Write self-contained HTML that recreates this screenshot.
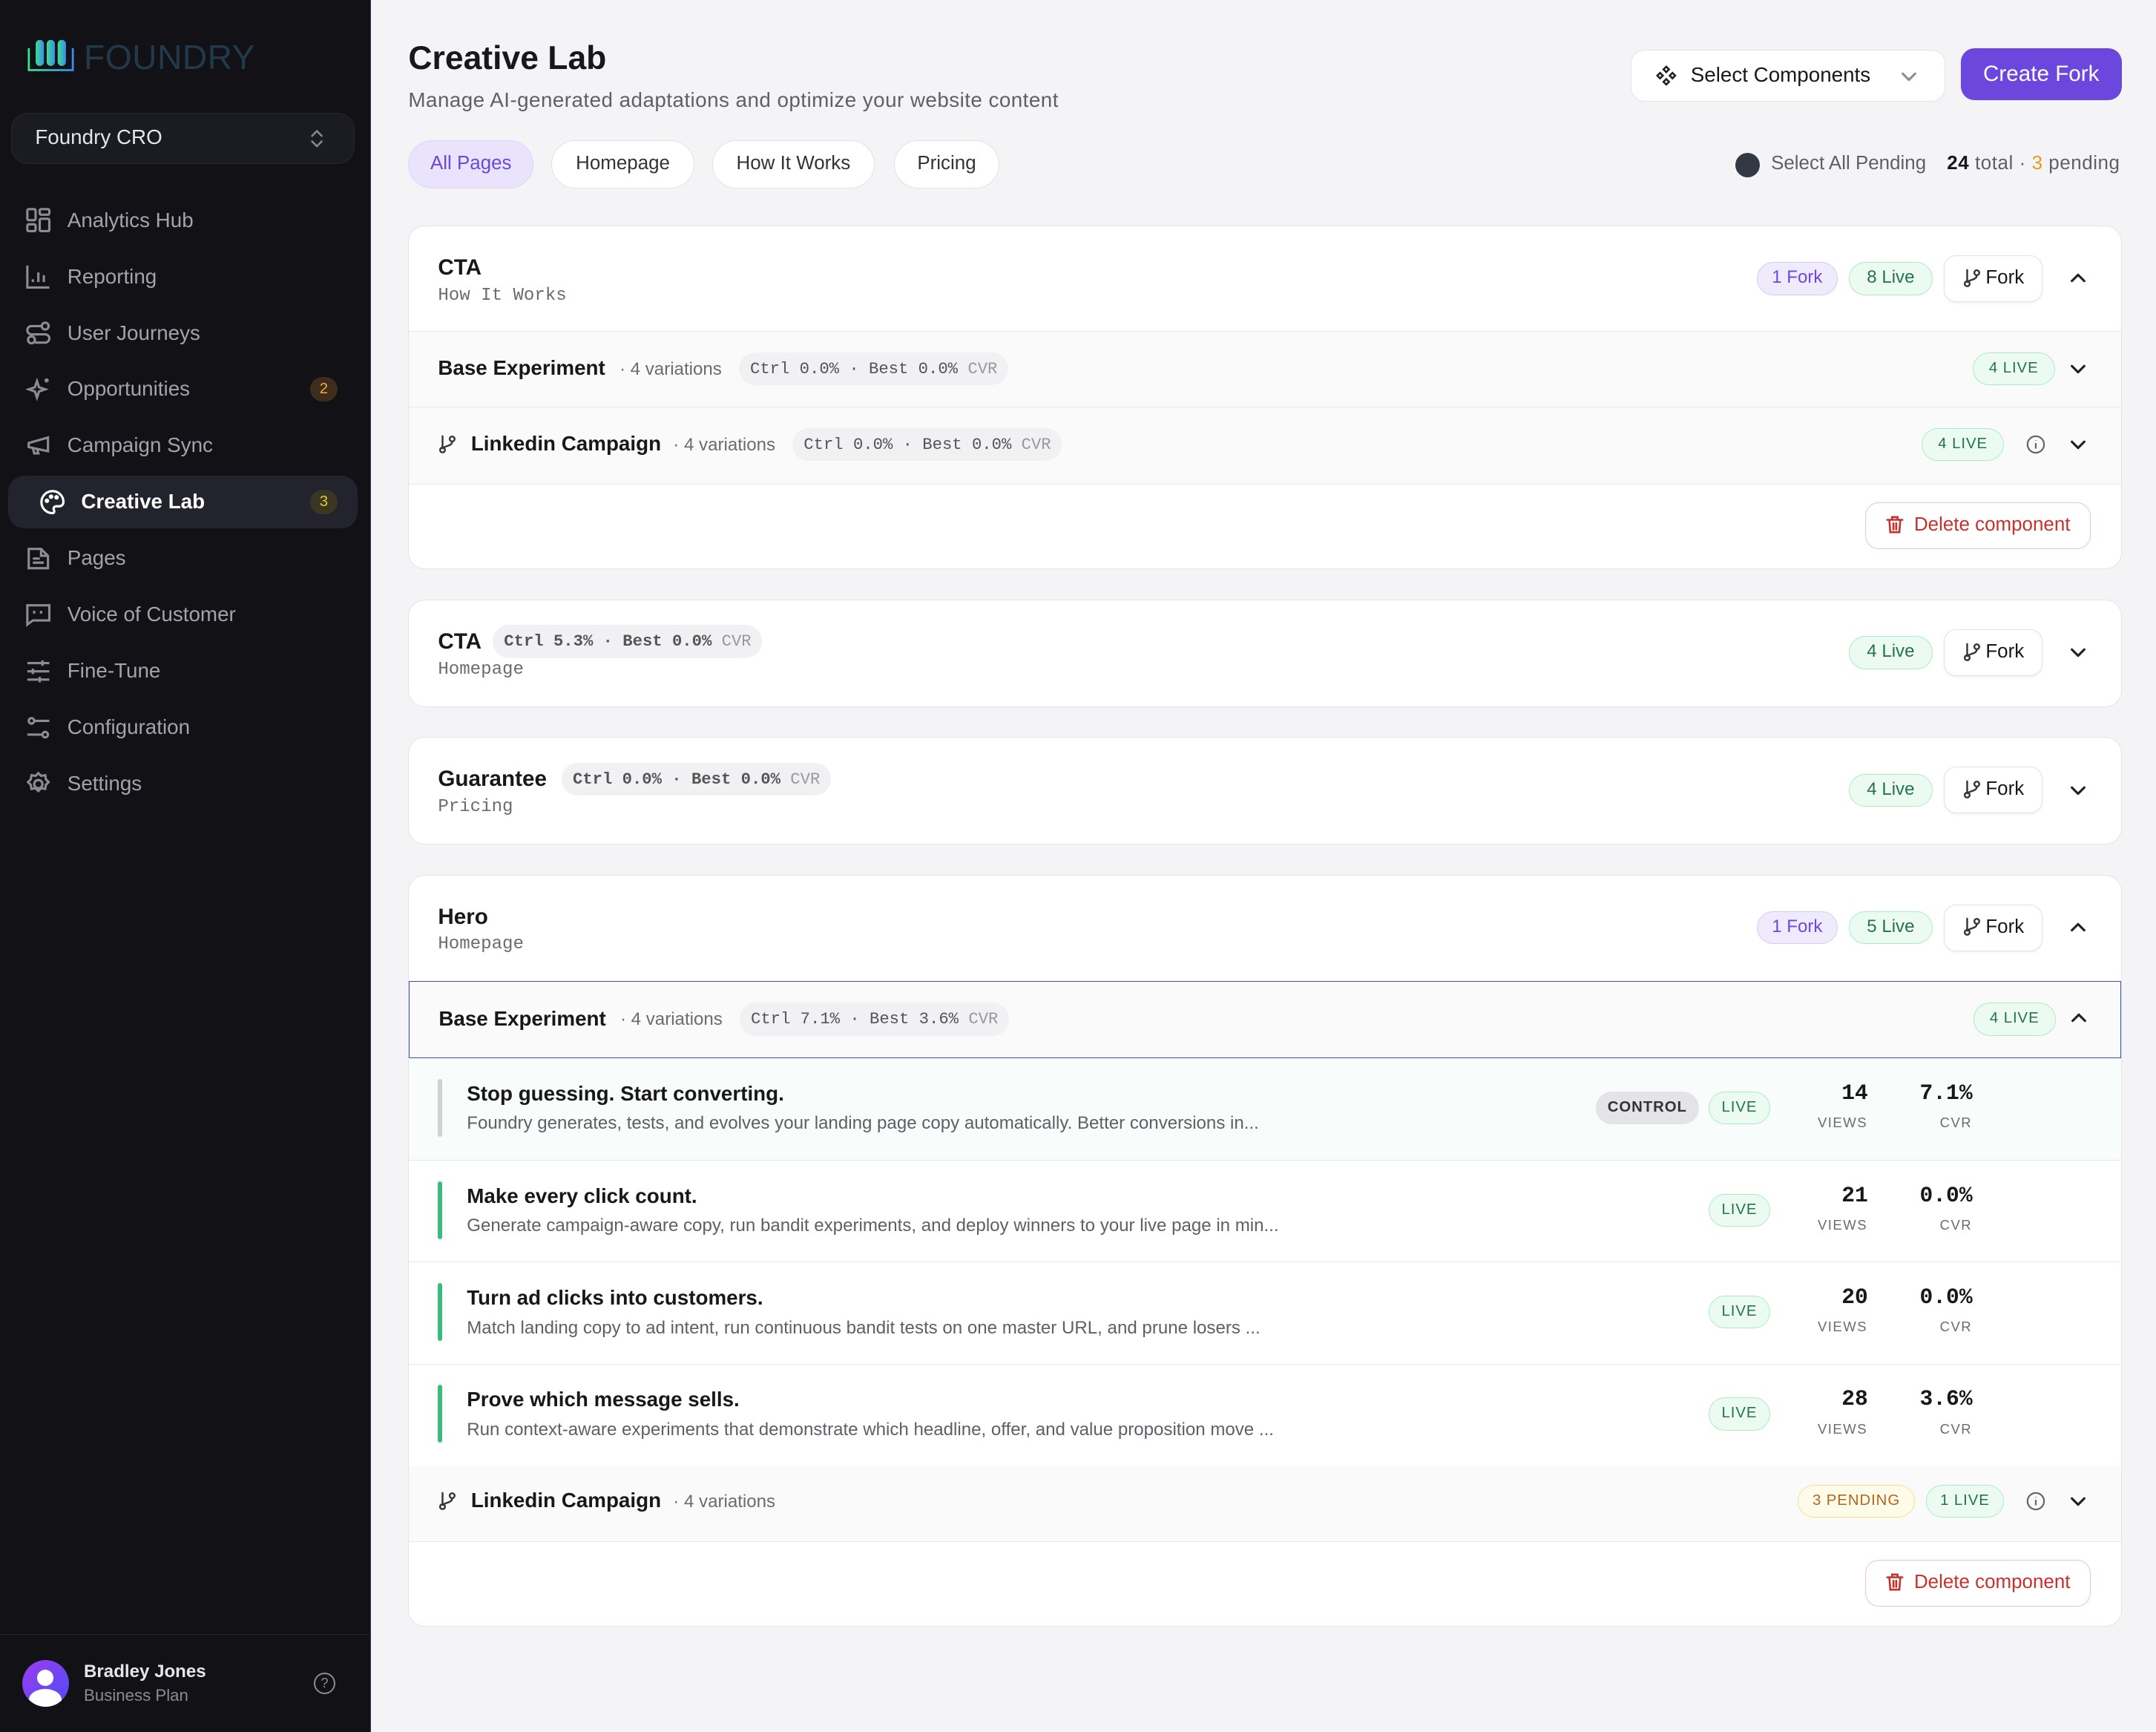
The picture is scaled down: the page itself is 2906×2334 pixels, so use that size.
<!DOCTYPE html>
<html><head><meta charset="utf-8"><style>
*{box-sizing:border-box;margin:0;padding:0}
html,body{width:2906px;height:2334px;overflow:hidden;background:#f4f4f6}
#r{zoom:1.85332;width:1568px;height:1260px;position:relative;font-family:"Liberation Sans",sans-serif;color:#18181b}
.a{position:absolute}
.sb{left:0;top:0;width:270px;height:1260px;background:#111116;border-right:1px solid #3a3560}
.nav{left:19px;height:20px;display:flex;align-items:center;color:#a3a3ab;font-size:15px}
.nav svg{width:18px;height:18px;margin-right:12px;stroke:#8b8b93;fill:none;stroke-width:1.7}
.cnt{position:absolute;right:24px;width:20px;height:18px;border-radius:9px;font-size:11px;text-align:center;line-height:18px}
.mono{font-family:"Liberation Mono",monospace}
.card{left:297px;width:1246px;background:#fff;border:1px solid #e4e4e8;border-radius:12px;overflow:hidden}
.row{position:absolute;left:0;right:0;border-top:1px solid #e7e7ea}
.b{position:absolute;height:24px;border-radius:12px;font-size:13px;line-height:22px;text-align:center;border:1px solid}
.fork{background:#efebfd;border-color:#d4cbf7;color:#6d47e0}
.live{background:#ecfbf2;border-color:#a9ecc6;color:#24734a}
.LV{font-size:11px;letter-spacing:.5px}
.fb{position:absolute;height:34px;width:72px;border:1px solid #e2e2e6;border-radius:9px;background:#fff;font-size:14px;line-height:32px;padding-left:30px;box-shadow:0 1px 2px rgba(0,0,0,.05)}
.fb svg{position:absolute;left:13px;top:9px}
.chev{position:absolute;width:14px;height:14px}
.t{position:absolute;font-size:15px;font-weight:bold}
.sub{position:absolute;font-size:13px;color:#6b6b73}
.pill{position:absolute;height:24px;border-radius:12px;background:#f1f1f4;font-size:12px;line-height:24px;padding:0 8px;color:#555;white-space:nowrap}
.del{position:absolute;width:164px;height:34px;border:1px solid #f3c4c1;border-radius:10px;color:#c9302c;font-size:14px;line-height:32px;padding-left:35px}
.del svg{position:absolute;left:14px;top:9px}
.vt{position:absolute;left:42px;font-size:15px;font-weight:bold}
.vd{position:absolute;left:42px;font-size:13px;color:#5f5f67}
.bar{position:absolute;left:21px;width:3px;border-radius:2px}
.num{position:absolute;font-family:"Liberation Mono",monospace;font-weight:bold;font-size:16px;text-align:right}
.lab{position:absolute;font-size:10px;color:#6b6b73;letter-spacing:.8px;text-align:center}
.br{position:absolute}
</style></head><body><div id="r">
<svg width="0" height="0" style="position:absolute"><defs>
<symbol id="dn" viewBox="0 0 14 14"><path d="M2.5 5l4.5 4.5L11.5 5" fill="none" stroke="#222" stroke-width="1.7" stroke-linecap="round" stroke-linejoin="round"/></symbol>
<symbol id="up" viewBox="0 0 14 14"><path d="M2.5 9L7 4.5 11.5 9" fill="none" stroke="#222" stroke-width="1.7" stroke-linecap="round" stroke-linejoin="round"/></symbol>
<symbol id="fk" viewBox="0 0 14 14"><g fill="none" stroke="#333" stroke-width="1.3" stroke-linecap="round"><path d="M3.5 1v8"/><circle cx="3.5" cy="11" r="1.8"/><circle cx="10.5" cy="3" r="1.8"/><path d="M10.5 4.8c0 3.5-5 3-7 5"/></g></symbol>
<symbol id="tr" viewBox="0 0 14 14"><g fill="none" stroke="#c9302c" stroke-width="1.4" stroke-linecap="round"><path d="M1.5 3.5h11M5 3.5V1.5h4v2M3 3.5l.7 9h6.6l.7-9M6 6v4.5M8 6v4.5"/></g></symbol>
<symbol id="inf" viewBox="0 0 14 14"><g fill="none" stroke="#666" stroke-width="1.2"><circle cx="7" cy="7" r="6"/><path d="M7 6v4M7 4v.3"/></g></symbol>
</defs></svg>
<!-- sidebar -->
<div class="a sb">
 <svg class="a" style="left:20px;top:27px" width="34" height="26" viewBox="0 0 34 26"><defs><linearGradient id="g" x1="0" x2="1"><stop offset="0" stop-color="#3ee08a"/><stop offset="1" stop-color="#3a8cf0"/></linearGradient></defs><path d="M1 8v16h32V8" fill="none" stroke="url(#g)" stroke-width="1.5"/><rect x="6" y="2" width="6" height="19" rx="3" fill="url(#g)"/><rect x="14" y="2" width="6" height="19" rx="3" fill="url(#g)"/><rect x="22" y="2" width="6" height="19" rx="3" fill="url(#g)"/></svg>
 <div class="a" style="left:61px;top:27px;font-size:25px;color:#22394a;letter-spacing:.2px">FOUNDRY</div>
 <div class="a" style="left:8px;top:82px;width:250px;height:37px;background:#1b1c21;border:1px solid #25262c;border-radius:12px;color:#e6e6ea;font-size:15px;line-height:35px;padding-left:17px">Foundry CRO
  <svg class="a" style="left:216px;top:10px" width="12" height="16" viewBox="0 0 12 16"><path d="M2.5 6L6 2.5 9.5 6M2.5 10L6 13.5 9.5 10" fill="none" stroke="#888" stroke-width="1.4" stroke-linecap="round"/></svg></div>
 <div class="a nav" style="top:150px"><svg viewBox="0 0 18 18"><rect x="1" y="1" width="6" height="8" rx="1"/><rect x="10" y="1" width="7" height="4" rx="1"/><rect x="1" y="12" width="6" height="5" rx="1"/><rect x="10" y="8" width="7" height="9" rx="1"/></svg>Analytics Hub</div>
 <div class="a nav" style="top:191px"><svg viewBox="0 0 18 18"><path d="M1 1v16h16M5 13v-2M9 13V6M13 13V8"/></svg>Reporting</div>
 <div class="a nav" style="top:232px"><svg viewBox="0 0 18 18"><circle cx="14" cy="4" r="2.5"/><circle cx="4" cy="14" r="2.5"/><path d="M11.5 4H4a3 3 0 000 6h10a3 3 0 010 6H6.5"/></svg>User Journeys</div>
 <div class="a nav" style="top:273px"><svg viewBox="0 0 18 18"><path d="M8 3l1.5 4.5L14 9l-4.5 1.5L8 15l-1.5-4.5L2 9l4.5-1.5zM15 1v3M13.5 2.5h3"/></svg>Opportunities</div>
 <div class="cnt" style="top:274px;background:#3d2d1a;color:#f0a94a">2</div>
 <div class="a nav" style="top:314px"><svg viewBox="0 0 18 18"><path d="M2 7l14-4v10L2 10zM5 10.5l1 4h3l-1-3.5"/></svg>Campaign Sync</div>
 <div class="a" style="left:6px;top:346px;width:254px;height:38px;background:#22232c;border-radius:12px"></div>
 <div class="a nav" style="top:355px;left:29px;color:#fff;font-weight:bold"><svg viewBox="0 0 18 18" style="stroke:#fff"><path d="M9 1a8 8 0 100 16c1.5 0 1.5-1.5 1-2.5s0-2.5 2-2.5h2a3 3 0 003-3C17 4.5 13.5 1 9 1z"/><circle cx="5" cy="8" r=".8"/><circle cx="8" cy="5" r=".8"/><circle cx="12" cy="5.5" r=".8"/></svg>Creative Lab</div>
 <div class="cnt" style="top:356px;background:#3a3621;color:#e8c33c">3</div>
 <div class="a nav" style="top:396px"><svg viewBox="0 0 18 18"><path d="M2 2h9l5 5v9H2zM5 9h5M5 12h8M11 2v5h5"/></svg>Pages</div>
 <div class="a nav" style="top:437px"><svg viewBox="0 0 18 18"><path d="M1 2h16v11H5l-4 3z"/><path d="M6 6v2M11 6v2"/></svg>Voice of Customer</div>
 <div class="a nav" style="top:478px"><svg viewBox="0 0 18 18"><path d="M1 3h16M1 9h16M1 15h16M12 1v4M5 7v4M10 13v4"/></svg>Fine-Tune</div>
 <div class="a nav" style="top:519px"><svg viewBox="0 0 18 18"><circle cx="4" cy="4" r="2"/><circle cx="14" cy="14" r="2"/><path d="M6 4h11M1 14h11"/></svg>Configuration</div>
 <div class="a nav" style="top:560px"><svg viewBox="0 0 18 18"><circle cx="9" cy="9" r="3"/><path d="M9 1l2 2 3-.5.5 3 2 2-2 2-.5 3-3-.5-2 2-2-2-3 .5-.5-3-2-2 2-2 .5-3 3 .5z"/></svg>Settings</div>
 <div class="a" style="left:0;top:1188px;width:270px;border-top:1px solid #26262c"></div>
 <div class="a" style="left:16px;top:1207px;width:34px;height:34px;border-radius:50%;background:linear-gradient(135deg,#9b3cf0,#4f4cf5);overflow:hidden"><div class="a" style="left:11px;top:7px;width:12px;height:12px;border-radius:50%;background:#fff"></div><div class="a" style="left:5px;top:21px;width:24px;height:16px;border-radius:50%;background:#fff"></div></div>
 <div class="a" style="left:61px;top:1208px;color:#e5e5ea;font-size:13px;font-weight:bold">Bradley Jones</div>
 <div class="a" style="left:61px;top:1226px;color:#8b8b93;font-size:12px">Business Plan</div>
 <div class="a" style="left:228px;top:1216px;width:16px;height:16px;border:1.5px solid #8b8b93;border-radius:50%;color:#8b8b93;font-size:10px;text-align:center;line-height:13px">?</div>
</div>
<!-- header -->
<div class="a" style="left:297px;top:29px;font-size:24px;font-weight:bold">Creative Lab</div>
<div class="a" style="left:297px;top:64px;font-size:15px;color:#5f5f67;letter-spacing:.25px">Manage AI-generated adaptations and optimize your website content</div>
<div class="a" style="left:1186px;top:36px;width:229px;height:38px;background:#fff;border:1px solid #e2e2e6;border-radius:10px;font-size:15px;line-height:36px;padding-left:43px">Select Components
 <svg class="a" style="left:195px;top:12px" width="14" height="14"><use href="#dn" style="opacity:.5"/></svg>
 <svg class="a" style="left:18px;top:11px" width="15" height="15" viewBox="0 0 15 15" fill="none" stroke="#222" stroke-width="1.4"><path d="M7.5 1l2 2-2 2-2-2zM3 5.5l2 2-2 2-2-2zM12 5.5l2 2-2 2-2-2zM7.5 10l2 2-2 2-2-2z"/></svg></div>
<div class="a" style="left:1426px;top:35px;width:117px;height:38px;background:#6b47de;border-radius:10px;color:#fff;font-size:16px;line-height:38px;text-align:center">Create Fork</div>
<div class="a" style="left:297px;top:102px;width:91px;height:35px;border-radius:18px;background:#e9e4fb;border:1px solid #ddd5f8;color:#6b47de;font-size:14px;line-height:33px;text-align:center">All Pages</div>
<div class="a" style="left:401px;top:102px;width:104px;height:35px;border-radius:18px;background:#fff;border:1px solid #e2e2e6;font-size:14px;line-height:33px;text-align:center;color:#333">Homepage</div>
<div class="a" style="left:518px;top:102px;width:118px;height:35px;border-radius:18px;background:#fff;border:1px solid #e2e2e6;font-size:14px;line-height:33px;text-align:center;color:#333">How It Works</div>
<div class="a" style="left:650px;top:102px;width:77px;height:35px;border-radius:18px;background:#fff;border:1px solid #e2e2e6;font-size:14px;line-height:33px;text-align:center;color:#333">Pricing</div>
<div class="a" style="left:1262px;top:111px;width:18px;height:18px;border-radius:50%;background:#343744"></div>
<div class="a" style="left:1288px;top:111px;font-size:14px;color:#5f5f67">Select All Pending</div>
<div class="a" style="left:1416px;top:111px;font-size:14px;color:#5f5f67;letter-spacing:.3px"><b style="color:#18181b">24</b> total · <span style="color:#e39b24">3</span> pending</div>

<!-- card 1 -->
<div class="a card" style="top:164px;height:250px">
 <div class="t" style="left:21px;top:21px;font-size:16px">CTA</div>
 <div class="sub mono" style="left:21px;top:43px">How It Works</div>
 <div class="b fork" style="left:980px;top:26px;width:59px">1 Fork</div>
 <div class="b live" style="left:1047px;top:26px;width:61px">8 Live</div>
 <div class="fb" style="left:1116px;top:21px"><svg width="14" height="14"><use href="#fk"/></svg>Fork</div>
 <svg class="chev" style="left:1207px;top:31px"><use href="#up"/></svg>
 <div class="row" style="top:76px;height:56px;background:#fafafa">
  <div class="t" style="left:21px;top:18px">Base Experiment</div><div class="sub" style="left:153px;top:20px">· 4 variations</div>
  <div class="pill mono" style="left:240px;top:15px">Ctrl 0.0% · Best 0.0% <span style="color:#999">CVR</span></div>
  <div class="b live LV" style="left:1137px;top:15px;width:60px">4 LIVE</div><svg class="chev" style="left:1207px;top:20px"><use href="#dn"/></svg>
 </div>
 <div class="row" style="top:131px;height:56px;background:#fafafa">
  <svg class="br" style="left:21px;top:20px" width="14" height="14"><use href="#fk"/></svg>
  <div class="t" style="left:45px;top:18px">Linkedin Campaign</div><div class="sub" style="left:192px;top:20px">· 4 variations</div>
  <div class="pill mono" style="left:279px;top:15px">Ctrl 0.0% · Best 0.0% <span style="color:#999">CVR</span></div>
  <div class="b live LV" style="left:1100px;top:15px;width:60px">4 LIVE</div>
  <svg class="br" style="left:1176px;top:20px" width="14" height="14"><use href="#inf"/></svg>
  <svg class="chev" style="left:1207px;top:20px"><use href="#dn"/></svg>
 </div>
 <div class="row" style="top:187px;height:62px">
  <div class="del" style="left:1059px;top:13px"><svg width="14" height="14"><use href="#tr"/></svg>Delete component</div>
 </div>
</div>

<!-- card 2 -->
<div class="a card" style="top:436px;height:78px">
 <div class="t" style="left:21px;top:21px;font-size:16px">CTA</div>
 <div class="pill mono" style="left:61px;top:18px;font-weight:bold">Ctrl 5.3% · Best 0.0% <span style="color:#999;font-weight:normal">CVR</span></div>
 <div class="sub mono" style="left:21px;top:43px">Homepage</div>
 <div class="b live" style="left:1047px;top:26px;width:61px">4 Live</div>
 <div class="fb" style="left:1116px;top:21px"><svg width="14" height="14"><use href="#fk"/></svg>Fork</div>
 <svg class="chev" style="left:1207px;top:31px"><use href="#dn"/></svg>
</div>

<!-- card 3 -->
<div class="a card" style="top:536px;height:78px">
 <div class="t" style="left:21px;top:21px;font-size:16px">Guarantee</div>
 <div class="pill mono" style="left:111px;top:18px;font-weight:bold">Ctrl 0.0% · Best 0.0% <span style="color:#999;font-weight:normal">CVR</span></div>
 <div class="sub mono" style="left:21px;top:43px">Pricing</div>
 <div class="b live" style="left:1047px;top:26px;width:61px">4 Live</div>
 <div class="fb" style="left:1116px;top:21px"><svg width="14" height="14"><use href="#fk"/></svg>Fork</div>
 <svg class="chev" style="left:1207px;top:31px"><use href="#dn"/></svg>
</div>

<!-- card 4 -->
<div class="a card" style="top:636px;height:547px">
 <div class="t" style="left:21px;top:21px;font-size:16px">Hero</div>
 <div class="sub mono" style="left:21px;top:43px">Homepage</div>
 <div class="b fork" style="left:980px;top:26px;width:59px">1 Fork</div>
 <div class="b live" style="left:1047px;top:26px;width:61px">5 Live</div>
 <div class="fb" style="left:1116px;top:21px"><svg width="14" height="14"><use href="#fk"/></svg>Fork</div>
 <svg class="chev" style="left:1207px;top:31px"><use href="#up"/></svg>
 <div class="row" style="top:77px;height:56px;background:#fafafa;border:1px solid #3b4fc4">
  <div class="t" style="left:21px;top:18px">Base Experiment</div><div class="sub" style="left:153px;top:20px">· 4 variations</div>
  <div class="pill mono" style="left:240px;top:15px">Ctrl 7.1% · Best 3.6% <span style="color:#999">CVR</span></div>
  <div class="b live LV" style="left:1137px;top:15px;width:60px">4 LIVE</div><svg class="chev" style="left:1207px;top:19px"><use href="#up"/></svg>
 </div>
 <div class="row" style="top:133px;height:74px;background:#f8fcfa;border-top:none">
  <div class="bar" style="top:15px;height:42px;background:#d0d0d6"></div>
  <div class="vt" style="top:17px">Stop guessing. Start converting.</div>
  <div class="vd" style="top:40px">Foundry generates, tests, and evolves your landing page copy automatically. Better conversions in...</div>
  <div class="b LV" style="left:863px;top:24px;width:75px;background:#e3e3e8;border-color:#e3e3e8;color:#333;font-weight:bold">CONTROL</div>
  <div class="b live LV" style="left:945px;top:24px;width:45px">LIVE</div>
  <div class="num" style="left:1020px;top:16px;width:41px">14</div><div class="lab" style="left:1020px;top:41px;width:45px">VIEWS</div>
  <div class="num" style="left:1090px;top:16px;width:47px">7.1%</div><div class="lab" style="left:1105px;top:41px;width:40px">CVR</div>
 </div>
 <div class="row" style="top:207px;height:75px">
  <div class="bar" style="top:15px;height:42px;background:#3dbb7d"></div>
  <div class="vt" style="top:17px">Make every click count.</div>
  <div class="vd" style="top:40px">Generate campaign-aware copy, run bandit experiments, and deploy winners to your live page in min...</div>
  <div class="b live LV" style="left:945px;top:24px;width:45px">LIVE</div>
  <div class="num" style="left:1020px;top:16px;width:41px">21</div><div class="lab" style="left:1020px;top:41px;width:45px">VIEWS</div>
  <div class="num" style="left:1090px;top:16px;width:47px">0.0%</div><div class="lab" style="left:1105px;top:41px;width:40px">CVR</div>
 </div>
 <div class="row" style="top:281px;height:75px">
  <div class="bar" style="top:15px;height:42px;background:#3dbb7d"></div>
  <div class="vt" style="top:17px">Turn ad clicks into customers.</div>
  <div class="vd" style="top:40px">Match landing copy to ad intent, run continuous bandit tests on one master URL, and prune losers ...</div>
  <div class="b live LV" style="left:945px;top:24px;width:45px">LIVE</div>
  <div class="num" style="left:1020px;top:16px;width:41px">20</div><div class="lab" style="left:1020px;top:41px;width:45px">VIEWS</div>
  <div class="num" style="left:1090px;top:16px;width:47px">0.0%</div><div class="lab" style="left:1105px;top:41px;width:40px">CVR</div>
 </div>
 <div class="row" style="top:355px;height:75px">
  <div class="bar" style="top:15px;height:42px;background:#3dbb7d"></div>
  <div class="vt" style="top:17px">Prove which message sells.</div>
  <div class="vd" style="top:40px">Run context-aware experiments that demonstrate which headline, offer, and value proposition move ...</div>
  <div class="b live LV" style="left:945px;top:24px;width:45px">LIVE</div>
  <div class="num" style="left:1020px;top:16px;width:41px">28</div><div class="lab" style="left:1020px;top:41px;width:45px">VIEWS</div>
  <div class="num" style="left:1090px;top:16px;width:47px">3.6%</div><div class="lab" style="left:1105px;top:41px;width:40px">CVR</div>
 </div>
 <div class="row" style="top:429px;height:55px;background:#fafafa;border-top:none">
  <svg class="br" style="left:21px;top:19px" width="14" height="14"><use href="#fk"/></svg>
  <div class="t" style="left:45px;top:17px">Linkedin Campaign</div><div class="sub" style="left:192px;top:19px">· 4 variations</div>
  <div class="b LV" style="left:1010px;top:14px;width:85px;background:#fefbe8;border-color:#f6e08a;color:#b3671a">3 PENDING</div>
  <div class="b live LV" style="left:1103px;top:14px;width:57px">1 LIVE</div>
  <svg class="br" style="left:1176px;top:19px" width="14" height="14"><use href="#inf"/></svg>
  <svg class="chev" style="left:1207px;top:19px"><use href="#dn"/></svg>
 </div>
 <div class="row" style="top:484px;height:62px">
  <div class="del" style="left:1059px;top:13px"><svg width="14" height="14"><use href="#tr"/></svg>Delete component</div>
 </div>
</div>
</div></body></html>
